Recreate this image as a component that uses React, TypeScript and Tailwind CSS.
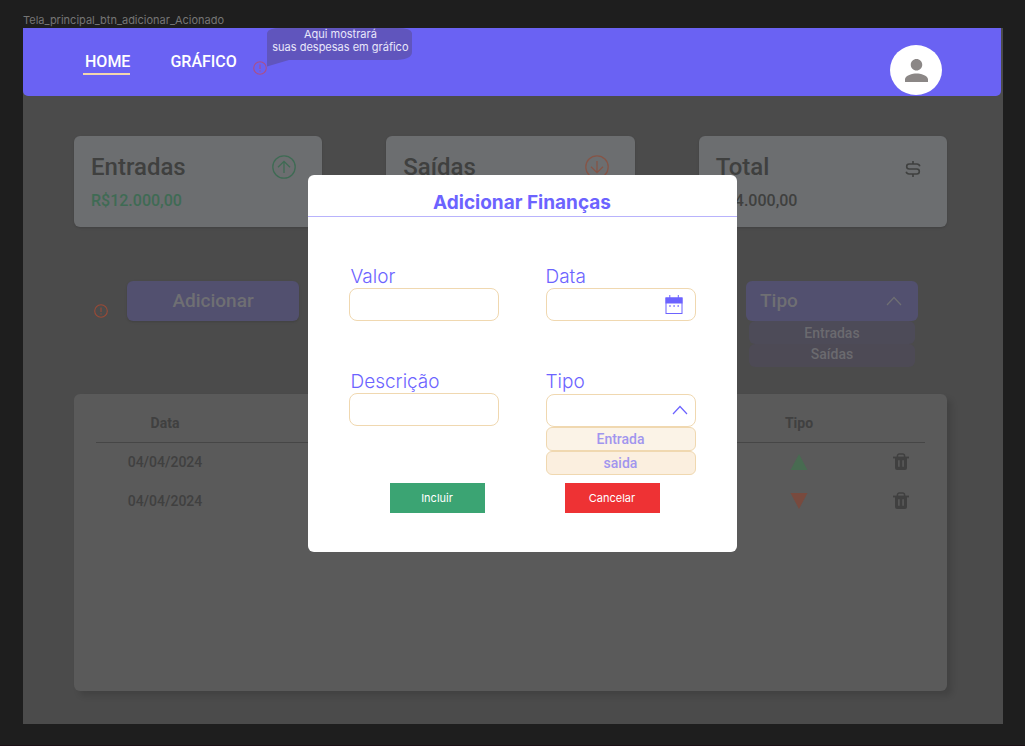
import React from 'react';

type IconProps = { className?: string };

const AlertIcon = ({ className }: IconProps) => (
  <svg viewBox="0 0 14 14" className={className} fill="none" stroke="currentColor" strokeWidth="1.1">
    <circle cx="7" cy="7" r="6.3" />
    <path d="M7 3.4V8" />
    <path d="M7 9.4v1.2" strokeWidth="1.3" />
  </svg>
);

const ArrowCircle = ({ className }: IconProps) => (
  <svg viewBox="0 0 24 24" className={className} fill="none" stroke="currentColor" strokeWidth="1.3">
    <circle cx="12" cy="12" r="11.2" />
    <path d="M12 18V6.5M6 12.3l6-6 6 6" />
  </svg>
);

const DollarIcon = ({ className }: IconProps) => (
  <svg viewBox="0 0 16 18" className={className} fill="none" stroke="currentColor" strokeWidth="1.6">
    <path d="M14.8 6.2A3 3 0 0 0 11.8 4H4.2a2.5 2.5 0 0 0 0 5h7.6a2.5 2.5 0 0 1 0 5H4.2a3 3 0 0 1-3-2.2" />
    <path d="M8 1v3M8 14v3" />
  </svg>
);

const ChevronUp = ({ className }: IconProps) => (
  <svg viewBox="0 0 16 10" className={className} fill="none" stroke="currentColor" strokeWidth="1.2">
    <path d="M1 9l7-7.5L15 9" />
  </svg>
);

const CalendarIcon = ({ className }: IconProps) => (
  <svg viewBox="0 0 18 20" className={className} fill="none" stroke="currentColor">
    <path d="M4.8 0v4M13.3 0v4" strokeWidth="1" />
    <rect x="1" y="3" width="16" height="15.5" strokeWidth="1" />
    <path d="M.5 2.5h17v6H.5z" fill="currentColor" stroke="none" />
    <path d="M4.3 11h1.4M8.4 11h1.4M12.5 11h1.4" strokeWidth="1.3" />
  </svg>
);

const TrashIcon = ({ className }: IconProps) => (
  <svg viewBox="0 0 16 18" className={className} fill="currentColor">
    <path d="M0 3.6h16v1.8H0z" />
    <path d="M4.4 4V3a2 2 0 0 1 2-2h3.2a2 2 0 0 1 2 2v1" fill="none" stroke="currentColor" strokeWidth="1.5" />
    <path
      fillRule="evenodd"
      d="M2 4.5h12V15a2 2 0 0 1-2 2H4a2 2 0 0 1-2-2zM5.1 7.2v6.6h1.6V7.2zM9.3 7.2v6.6h1.6V7.2z"
    />
  </svg>
);

const Triangle = ({ className }: IconProps) => (
  <svg viewBox="0 0 18 17" className={className} fill="currentColor">
    <path d="M9 0l9 17H0z" />
  </svg>
);

function SummaryCard({
  title,
  value,
  valueColor,
  icon,
}: {
  title: string;
  value?: string;
  valueColor?: string;
  icon: React.ReactNode;
}) {
  return (
    <section className="flex min-h-[91px] justify-between rounded-md bg-[#6c6e70] pt-[15px] pr-[26px] pl-[17px] shadow-sm shadow-black/10">
      <div className="flex flex-col gap-[6px]">
        <h2 className="text-2xl leading-8 font-medium text-[#3f403f]">{title}</h2>
        {value && <p className={`text-base leading-6 font-medium ${valueColor}`}>{value}</p>}
      </div>
      <div className="flex h-8 w-6 items-center justify-end">{icon}</div>
    </section>
  );
}

const rows = [
  { date: '04/04/2024', kind: 'in' },
  { date: '04/04/2024', kind: 'out' },
];

const fieldLabel = 'text-[19px] leading-[23px] font-light text-[#6c63ff]';
const field = 'h-[33px] w-full rounded-lg border border-[#f0d8b0] bg-white px-2 text-sm text-[#6c63ff] outline-none';
const option =
  'w-full rounded-md border border-[#f0d8b0] text-center font-[Roboto,sans-serif] text-sm leading-5 font-medium text-[#a196ee]';

function AddDialog() {
  return (
    <div
      role="dialog"
      aria-labelledby="dialog-title"
      className="w-[429px] rounded-md bg-white font-[Inter,sans-serif]"
    >
      <h2
        id="dialog-title"
        className="border-b border-[#b8b3fc] pt-[14px] text-center text-[19px] leading-[27px] font-bold text-[#6c63ff]"
      >
        Adicionar Finanças
      </h2>
      <form>
        <div className="grid grid-cols-2 gap-x-[47px] gap-y-[49px] px-[41px] pt-12">
          <div className="flex flex-col">
            <label htmlFor="valor" className={`${fieldLabel} pl-0.5`}>Valor</label>
            <input id="valor" type="text" className={field} />
          </div>
          <div className="flex flex-col">
            <label htmlFor="data" className={fieldLabel}>Data</label>
            <div className="relative flex">
              <input id="data" type="text" className={field} />
              <CalendarIcon className="pointer-events-none absolute top-[7px] right-[13px] h-5 w-[18px] text-[#6c63ff]" />
            </div>
          </div>
          <div className="flex flex-col">
            <label htmlFor="descricao" className={`${fieldLabel} pl-0.5`}>Descrição</label>
            <input id="descricao" type="text" className={field} />
          </div>
          <div className="flex flex-col">
            <label htmlFor="tipo" className={fieldLabel}>Tipo</label>
            <div className="relative flex pt-px">
              <select id="tipo" className={`${field} appearance-none`}>
                <option></option>
              </select>
              <ChevronUp className="pointer-events-none absolute top-3 right-2 h-[10px] w-4 text-[#6c63ff]" />
            </div>
            <button type="button" className={`${option} h-6 bg-[#fbf3e7]`}>Entrada</button>
            <button type="button" className={`${option} h-6 bg-[#fbefdf]`}>saida</button>
          </div>
        </div>
        <div className="flex gap-20 pt-2 pb-[39px] pl-[82px] text-[11px]">
          <button type="submit" className="h-[30px] w-[95px] bg-[#3ba473] text-white">Incluir</button>
          <button type="button" className="h-[30px] w-[95px] bg-[#ee3234] text-white">Cancelar</button>
        </div>
      </form>
    </div>
  );
}

export default function App() {
  return (
    <div className="min-h-screen border-b border-[#1c1017] bg-[#1e1e1e] pr-[22px] pb-[21px] pl-[23px] font-[Roboto,sans-serif]">
      <p className="pt-3 font-[Inter,sans-serif] text-[11px] leading-4 text-[#757575]">
        Tela_principal_btn_adicionar_Acionado
      </p>
      <div className="relative bg-[#4b4b4b]">
        <header className="mr-0.5 flex h-[68px] items-end justify-between rounded-b-[5px] bg-[#6a62f3] pr-[59px] pb-px pl-[60px]">
          <nav className="flex items-center gap-10 self-center pt-[3px] text-base leading-[22px] font-medium text-white">
            <a href="#home" className="border-b-2 border-[#f2d6ad] pl-0.5">HOME</a>
            <div className="relative">
              <a href="#grafico" className="block border-b-2 border-transparent">GRÁFICO</a>
              <AlertIcon className="absolute top-[10px] left-[83px] h-[14px] w-[14px] text-[#ad4f86]" />
              <div className="absolute -top-[23px] left-[97px] w-[146px]">
                <svg viewBox="0 0 146 39" className="absolute inset-0 h-[39px] w-[146px]" fill="#6055bd">
                  <path d="M0 5Q1 0 14 0H130Q144 0 145 5V24Q145 32 126 32H22L0 38.5z" />
                </svg>
                <p className="relative text-center font-[Inter,sans-serif] text-[11px] leading-[13px] font-normal whitespace-nowrap text-[#e9e7fa]">
                  Aqui mostrará
                  <br />
                  suas despesas em gráfico
                </p>
              </div>
            </div>
          </nav>
          <button aria-label="Perfil" className="flex h-[50px] w-[52px] items-center justify-center rounded-[50%] bg-white">
            <svg viewBox="4 4 16 16" className="h-[23px] w-[23px]" fill="#8b8786">
              <path d="M12 12c2.21 0 4-1.79 4-4s-1.79-4-4-4-4 1.79-4 4 1.79 4 4 4zm0 2c-2.67 0-8 1.34-8 4v2h16v-2c0-2.66-5.33-4-8-4z" />
            </svg>
          </button>
        </header>

        <main className="pt-10 pr-14 pb-[33px] pl-[51px]">
          <div className="grid grid-cols-3 gap-16">
            <SummaryCard
              title="Entradas"
              value="R$12.000,00"
              valueColor="text-[#3f6b54]"
              icon={<ArrowCircle className="h-6 w-6 text-[#3f6b54]" />}
            />
            <SummaryCard
              title="Saídas"
              icon={<ArrowCircle className="h-6 w-6 rotate-180 text-[#865547]" />}
            />
            <SummaryCard
              title="Total"
              value="R$4.000,00"
              valueColor="text-[#3f403f]"
              icon={<DollarIcon className="mt-1 h-[18px] w-4 text-[#3f403f]" />}
            />
          </div>

          <div className="mt-[54px] flex items-start justify-between pr-[29px] pl-5">
            <div className="flex items-start gap-[19px]">
              <AlertIcon className="mt-[23px] h-[14px] w-[14px] text-[#9b4a36]" />
              <button className="h-10 w-[172px] rounded-md bg-[#52506f] text-[19px] font-medium text-[#6f6f73] shadow-sm">
                Adicionar
              </button>
            </div>
            <div className="w-[172px]">
              <button className="flex h-10 w-full items-center justify-between rounded-md bg-[#52506f] pr-4 pl-[14px] text-[19px] font-medium text-[#6f6f73]">
                Tipo
                <ChevronUp className="h-[10px] w-4" />
              </button>
              <div className="flex flex-col px-[3px] text-sm font-medium text-[#6b6a6f]">
                <button className="h-[23px] rounded-md bg-[#4d4b58]">Entradas</button>
                <button className="h-[23px] rounded-md bg-[#4d4a55] pb-1">Saídas</button>
              </div>
            </div>
          </div>

          <section className="mt-[27px] min-h-[297px] rounded-md bg-[#5a5a5a] px-[22px] pt-[10px] shadow-[5px_5px_6px_rgba(0,0,0,0.12)]">
            <table className="w-full table-fixed border-collapse text-center text-sm font-medium text-[#404040]">
              <colgroup>
                <col className="w-[138px]" />
                <col />
                <col className="w-[154px]" />
                <col className="w-[49px]" />
              </colgroup>
              <thead>
                <tr className="h-[38px] border-b border-[#464646]">
                  <th className="font-bold">Data</th>
                  <th></th>
                  <th className="font-bold">Tipo</th>
                  <th></th>
                </tr>
              </thead>
              <tbody>
                {rows.map((r, i) => (
                  <tr key={i} className="h-[39px]">
                    <td>{r.date}</td>
                    <td></td>
                    <td>
                      <Triangle
                        className={
                          r.kind === 'in'
                            ? 'mx-auto h-4 w-[18px] text-[#486b51]'
                            : 'mx-auto h-4 w-[18px] rotate-180 text-[#784a3e]'
                        }
                      />
                    </td>
                    <td>
                      <button aria-label="Excluir" className="block w-full">
                        <TrashIcon className="mx-auto h-[18px] w-4" />
                      </button>
                    </td>
                  </tr>
                ))}
              </tbody>
            </table>
          </section>
        </main>

        <div className="absolute inset-0 flex items-start justify-center pt-[147px] pl-[18px]">
          <AddDialog />
        </div>
      </div>
    </div>
  );
}
